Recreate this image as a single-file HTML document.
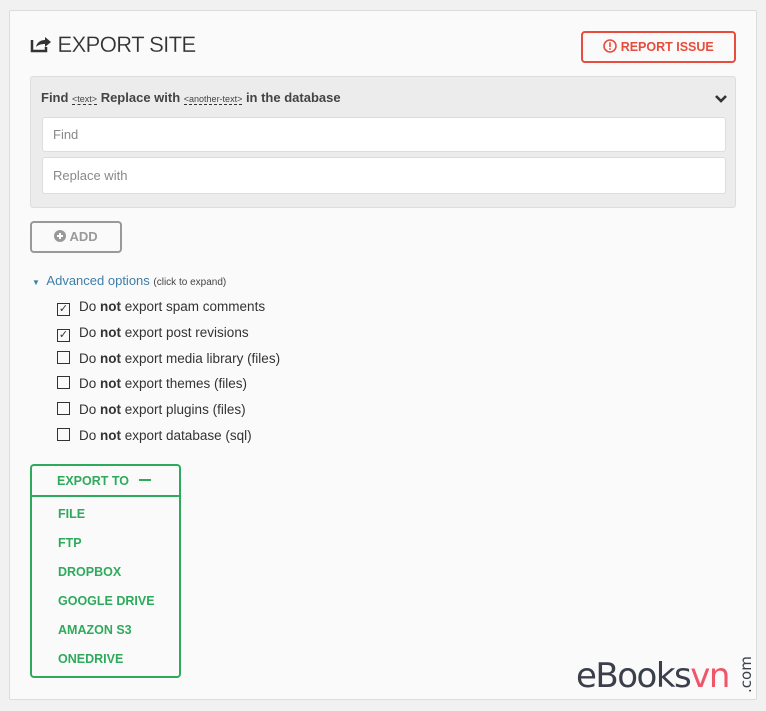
<!DOCTYPE html>
<html><head><style>
*{box-sizing:border-box}
body{margin:0;width:766px;height:711px;background:#f1f1f1;font-family:"Liberation Sans",sans-serif;position:relative;overflow:hidden}
.panel{position:absolute;left:9px;top:10px;width:748px;height:690px;background:#fafafa;border:1px solid #dcdcdc;border-radius:2px}
.a{position:absolute}
.title{left:30px;top:32px;font-size:22px;color:#333;font-weight:normal;letter-spacing:-0.6px;-webkit-text-stroke:0.2px #fafafa}
.rep{left:581px;top:31px;width:155px;height:32px;border:2px solid #e74c3c;border-radius:4px;color:#e74c3c;font-size:12.5px;font-weight:bold;line-height:28px;text-align:center}
.fr{left:30px;top:76px;width:706px;height:132px;background:#ececec;border:1px solid #ddd;border-radius:3px}
.fr .h{position:absolute;left:10px;top:13px;font-size:13px;font-weight:bold;color:#444}
.fr .h small{font-size:9px;font-weight:normal;border-bottom:1px dashed #333}
.inp{position:absolute;left:11px;width:684px;height:35px;background:#fff;border:1px solid #ddd;border-radius:3px;font-size:13px;color:#888;line-height:33px;padding-left:10px}
.add{left:30px;top:221px;width:92px;height:32px;border:2px solid #999;border-radius:4px;color:#999;font-size:13px;font-weight:bold;line-height:28px;text-align:center}
.adv{left:32px;top:273px;font-size:13px;color:#3e7ea8}
.adv small{font-size:10px;color:#444}
.opt{left:57px;font-size:13.5px;color:#333;line-height:16px}
.cb{display:inline-block;width:13px;height:13px;border:1px solid #333;vertical-align:-1px;margin-right:9px;font-size:11px;line-height:11px;text-align:center}
.ex{left:30px;top:464px;width:151px;height:214px;border:2px solid #2eaa5c;border-radius:4px;color:#2eaa5c;font-size:12.5px;font-weight:bold}
.ex .hd{height:31px;border-bottom:2px solid #2eaa5c;line-height:31px;padding-left:25px}
.ex div.i{padding-left:26px;height:29px;line-height:34px}
.logo{left:576px;top:656px;font-size:34px;color:#3a3f4a;letter-spacing:-1.5px;font-family:"DejaVu Sans",sans-serif;font-weight:normal}
</style></head><body>
<div class="panel"></div>
<div class="a title"><svg width="22" height="18" viewBox="0 0 22 18" style="vertical-align:-1px"><path d="M2 5v11h14v-4" fill="none" stroke="#333" stroke-width="2.5"/><path d="M6 12c1-5 5-7 9-7V2l6 5-6 5V9c-4 0-7 1-9 3z" fill="#333"/></svg> EXPORT SITE</div>
<div class="a rep"><svg width="14" height="14" viewBox="0 0 14 14" style="vertical-align:-2px"><circle cx="7" cy="7" r="6" fill="none" stroke="#e74c3c" stroke-width="1.6"/><rect x="6.2" y="3.2" width="1.6" height="4.8" fill="#e74c3c"/><rect x="6.2" y="9.2" width="1.6" height="1.6" fill="#e74c3c"/></svg> REPORT ISSUE</div>
<div class="a fr"><div class="h">Find <small>&lt;text&gt;</small> Replace with <small>&lt;another-text&gt;</small> in the database</div>
<svg style="position:absolute;right:8px;top:17px" width="12" height="9" viewBox="0 0 12 9"><path d="M1 2l5 5 5-5" fill="none" stroke="#333" stroke-width="2.6"/></svg>
<div class="inp" style="top:40px">Find</div><div class="inp" style="top:80px;height:37px;line-height:35px">Replace with</div></div>
<div class="a add"><svg width="12" height="12" viewBox="0 0 12 12" style="vertical-align:-1px"><circle cx="6" cy="6" r="6" fill="#999"/><path d="M6 3v6M3 6h6" stroke="#fff" stroke-width="2"/></svg> ADD</div>
<div class="a adv"><span style="font-size:8px;color:#3e7ea8">&#9660;</span>&nbsp; Advanced options <small>(click to expand)</small></div>
<div class="a opt" style="top:299px"><span class="cb">✓</span>Do <b>not</b> export spam comments</div>
<div class="a opt" style="top:325px"><span class="cb">✓</span>Do <b>not</b> export post revisions</div>
<div class="a opt" style="top:351px"><span class="cb"></span>Do <b>not</b> export media library (files)</div>
<div class="a opt" style="top:376px"><span class="cb"></span>Do <b>not</b> export themes (files)</div>
<div class="a opt" style="top:402px"><span class="cb"></span>Do <b>not</b> export plugins (files)</div>
<div class="a opt" style="top:428px"><span class="cb"></span>Do <b>not</b> export database (sql)</div>
<div class="a ex"><div class="hd">EXPORT TO &nbsp;&nbsp;<span style="display:inline-block;width:12px;height:2px;background:#2eaa5c;vertical-align:4px"></span></div>
<div class="i">FILE</div><div class="i">FTP</div><div class="i">DROPBOX</div><div class="i">GOOGLE DRIVE</div><div class="i">AMAZON S3</div><div class="i">ONEDRIVE</div></div>
<div class="a logo">eBooks<span style="color:#f0566a">vn</span></div>
<div class="a" style="left:737px;top:693px;transform:rotate(-90deg);transform-origin:0 0;font-size:15px;color:#3a3f4a;font-family:'DejaVu Sans',sans-serif">.com</div>
</body></html>
